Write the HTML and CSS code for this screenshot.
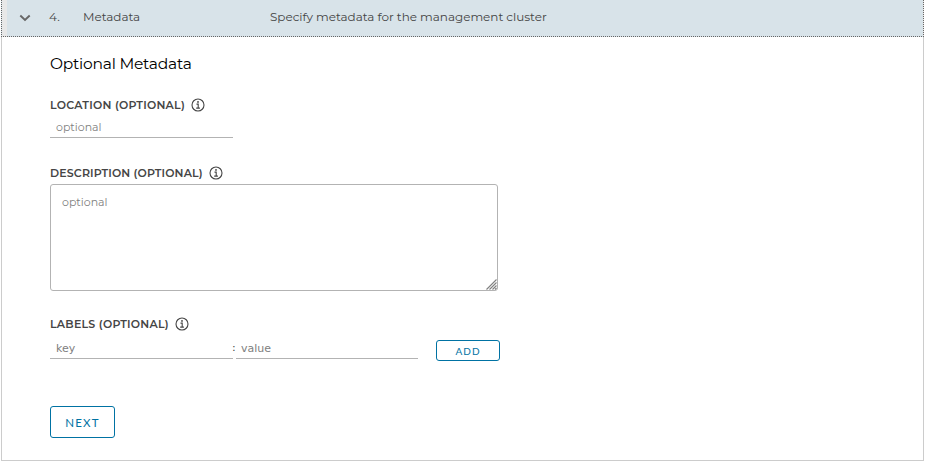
FILE: index.html
```html
<!DOCTYPE html>
<html lang="en">
<head>
<meta charset="utf-8">
<title>Metadata</title>
<link rel="stylesheet" href="styles.css">
</head>
<body>
<svg class="defs" aria-hidden="true">
  <symbol id="info" viewBox="0 0 14 14">
    <circle cx="7" cy="7" r="6" fill="none" stroke="#454545" stroke-width="1.1"/>
    <circle cx="7" cy="3.9" r=".95" fill="#454545"/>
    <path d="M5.5 6.1H7.2V10M5.2 10.1H8.9" fill="none" stroke="#454545" stroke-width="1.1"/>
  </symbol>
</svg>
<section class="panel">
  <header class="head">
    <svg class="caret" viewBox="0 0 12 8"><path d="M1.3 1.5L6 6L10.7 1.5" fill="none" stroke="#666" stroke-width="1.9"/></svg>
    <span class="num">4.</span>
    <span class="name">Metadata</span>
    <span class="summary">Specify metadata for the management cluster</span>
  </header>
  <div class="content">
    <h4 class="title">Optional Metadata</h4>
    <div class="label loc"><span>LOCATION (OPTIONAL)</span><svg class="info"><use href="#info"/></svg></div>
    <input class="field" placeholder="optional">
    <div class="label desc"><span>DESCRIPTION (OPTIONAL)</span><svg class="info"><use href="#info"/></svg></div>
    <div class="area">
      <textarea placeholder="optional"></textarea>
      <svg class="grip" viewBox="0 0 11 11"><path d="M.5 10.5L10.5 .5M3.5 10.5L10.5 3.5M6.5 10.5L10.5 6.5M9 10.5L10.5 9" fill="none" stroke="#808080" stroke-width="1.1"/></svg>
    </div>
    <div class="label labels"><span>LABELS (OPTIONAL)</span><svg class="info"><use href="#info"/></svg></div>
    <div class="pair">
      <input class="field key" placeholder="key">
      <span class="colon">:</span>
      <input class="field value" placeholder="value">
      <button class="btn add">ADD</button>
    </div>
    <button class="btn next">NEXT</button>
  </div>
</section>
</body>
</html>
```
FILE: styles.css
```css
* { box-sizing: border-box; }
body { margin: 0; background: #fff; font-family: Metropolis, Montserrat, Lato, sans-serif; color: #454545; overflow: hidden; }
.defs { display: none; }
.panel { margin-left: 1px; width: 923px; height: 461px; border: 1px solid #ccc; border-top: 0; }
.head { display: flex; align-items: center; margin: 0 -1px; height: 37px; padding: 0 0 4px 17px; background: linear-gradient(90deg, #e8e8e8 5px, #d8e3e9 5px); border: 1px dotted #666; border-top: 0; font-size: 12px; white-space: nowrap; letter-spacing: -.03px; }
.caret { width: 12px; height: 8px; margin-top: 3px; }
.num { width: 34px; margin-left: 18px; letter-spacing: 0; }
.name { width: 187px; }
.content { padding: 16px 0 0 48px; }
.title { margin: 0; height: 21px; font-weight: 400; font-size: 15.5px; line-height: 22px; letter-spacing: -.24px; color: #000; }
.label { display: flex; align-items: center; height: 16px; gap: 6px; font-size: 11px; font-weight: 600; white-space: nowrap; letter-spacing: .25px; }
.info { width: 14px; height: 14px; }
.loc { margin-top: 23px; }
.field { display: block; width: 183px; height: 25px; padding: 4px 6px 0; border: 0; border-bottom: 1px solid #b3b3b3; background: none; font: 11px Montserrat, Lato, sans-serif; letter-spacing: 0; outline: 0; }
input::placeholder, textarea::placeholder { color: #808080; opacity: 1; }
.desc { margin-top: 27px; letter-spacing: .16px; }
.area { position: relative; width: 448px; height: 107px; margin-top: 3px; }
textarea { display: block; width: 100%; height: 100%; padding: 10px 11px; border: 1px solid #b3b3b3; border-radius: 3px; resize: none; font: 11px/15px Montserrat, Lato, sans-serif; letter-spacing: 0; }
.grip { position: absolute; right: 1px; bottom: 1px; width: 11px; height: 11px; }
.labels { margin-top: 25px; }
.pair { display: flex; height: 29px; margin-top: 2px; }
.pair .field { flex: none; height: 25px; font-family: "DejaVu Sans", sans-serif; }
.colon { width: 3px; margin-left: -1px; margin-right: 1px; font: 11px/27px "DejaVu Sans", sans-serif; height: 27px; }
.pair .value { width: 182px; padding-left: 5px; }
.btn { display: block; padding: 0; border: 1px solid #0072a3; border-radius: 3px; background: #fff; color: #0072a3; font-family: Lato, sans-serif; }
.add { width: 64px; height: 21px; margin: 6px 0 0 18px; padding-top: 1px; font-size: 10px; letter-spacing: 1px; }
.next { width: 65px; height: 32px; margin-top: 43px; padding-top: 1px; font-size: 11.5px; letter-spacing: 1.2px; }
```
